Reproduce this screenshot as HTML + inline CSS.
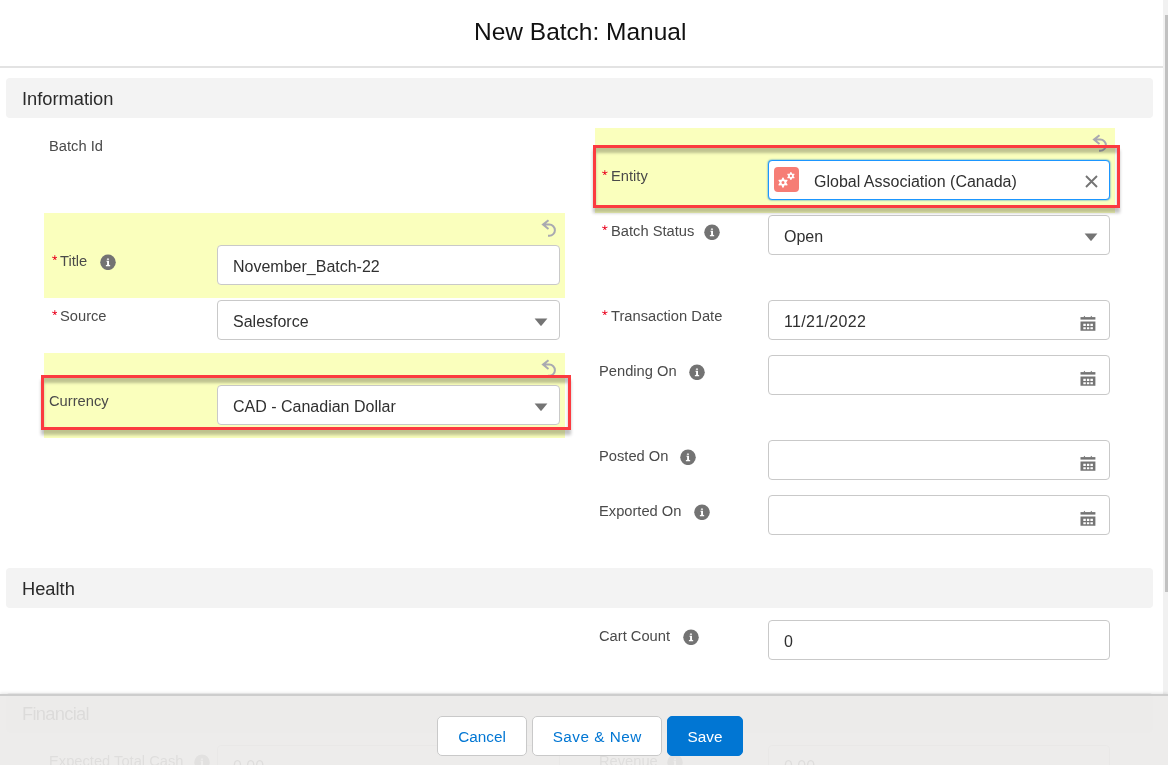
<!DOCTYPE html>
<html><head><meta charset="utf-8">
<style>
html,body{margin:0;padding:0}
body{width:1168px;height:765px;overflow:hidden;position:relative;background:#fff;font-family:"Liberation Sans",sans-serif}
.a{position:absolute}
.t{position:absolute;line-height:1;white-space:nowrap;will-change:transform}
.hdr-line{left:0;top:66px;width:1163px;height:2px;background:#e3e3e3}
.sec{left:6px;width:1147px;height:40px;background:#f3f3f3;border-radius:4px}
.sect{font-size:18.3px;color:#2a2a2a;left:22.2px;margin-top:.5px}
.hl{background:#faffbd}
.lbl{font-size:14.7px;color:#4a4a4a;margin-top:.4px}
.ast{position:absolute}
.inp{position:absolute;box-sizing:border-box;height:40px;border:1px solid #c9c9c9;border-radius:4px;background:#fff}
.il{left:217px;width:343px}
.ir{left:768px;width:342px}
.itx{position:absolute;left:15.2px;top:12.5px;font-size:16px;line-height:1;color:#303030;white-space:nowrap;will-change:transform}
.info{position:absolute;width:16px;height:16px}
.arrow{position:absolute;right:11px;top:17px}
.cal{position:absolute;right:13px;top:14px;width:17px;height:17px}
.undo{position:absolute;width:16px;height:18px}
.redbox{position:absolute;box-sizing:border-box;border:3px solid #fb3b40;box-shadow:0 5px 3px rgba(0,0,0,.24), inset 0 5px 3px rgba(0,0,0,.24)}
.footer{left:0;top:694px;width:1168px;height:71px;background:rgba(235,234,233,.92);border-top:2px solid #cdcdcd;box-sizing:border-box;box-shadow:0 -1px 3px rgba(0,0,0,.1)}
.btn{position:absolute;top:716px;height:40px;box-sizing:border-box;border:1px solid #c9c9c9;border-radius:5px;background:#fff;color:#0176d3;font-size:15.3px;display:flex;align-items:center;justify-content:center;white-space:nowrap;padding-top:1.4px;will-change:transform}
.scroll-track{left:1163px;top:0;width:5px;height:694px;background:#f1f1f1}
.scroll-thumb{left:1165px;top:15px;width:3px;height:577px;background:#c1c1c1}
</style></head><body>

<!-- header -->
<div class="t" style="left:473.6px;top:19.5px;font-size:24.5px;color:#111">New Batch: Manual</div>
<div class="a hdr-line"></div>

<!-- Information section -->
<div class="a sec" style="top:78px"></div>
<div class="t sect" style="top:89.2px">Information</div>

<!-- Left column -->
<div class="t lbl" style="left:48.8px;top:138.5px">Batch Id</div>

<div class="a hl" style="left:44px;top:213px;width:521px;height:85px"></div>
<svg class="undo" style="left:541px;top:219px" viewBox="0 0 16 18"><g><path d="M7.5 1.2 L2 5.6 L7.5 10 M2 5.6 H8.3 A5.6 5.6 0 0 1 8.3 16.8 H7" fill="none" stroke="#a9a9b1" stroke-width="2"/></g></svg>
<svg class="ast" style="left:51.5px;top:254.6px" width="5.6" height="5.8" viewBox="0 0 6 6.2"><g><path d="M3 0.6 V3.2 M3 3.2 L0.5 2.4 M3 3.2 L5.5 2.4 M3 3.2 L1.5 5.5 M3 3.2 L4.5 5.5" stroke="#ea001e" stroke-width="0.95" stroke-linecap="round" fill="none"/></g></svg>
<div class="t lbl" style="left:59.5px;top:253.4px">Title</div>
<svg class="info" style="left:100px;top:254px" viewBox="0 0 16 16"><g transform="translate(0 .35)"><circle cx="8" cy="8" r="7.75" fill="#737373"/><rect x="6.85" y="4.2" width="2.2" height="1.3" rx=".45" fill="#fff"/><path d="M6.5 6.5 H9.0 V10.4 L10.2 10.85 V11.85 H5.85 V10.85 L7.1 10.4 V7.5 L6.5 7.3 Z" fill="#fff"/></g></svg>
<div class="inp il" style="top:245px"><div class="itx">November_Batch-22</div></div>

<svg class="ast" style="left:51.5px;top:309.6px" width="5.6" height="5.8" viewBox="0 0 6 6.2"><g><path d="M3 0.6 V3.2 M3 3.2 L0.5 2.4 M3 3.2 L5.5 2.4 M3 3.2 L1.5 5.5 M3 3.2 L4.5 5.5" stroke="#ea001e" stroke-width="0.95" stroke-linecap="round" fill="none"/></g></svg>
<div class="t lbl" style="left:59.5px;top:308.6px">Source</div>
<div class="inp il" style="top:300px"><div class="itx">Salesforce</div><svg class="arrow" width="14" height="9" viewBox="0 0 14 9"><path d="M0.6 0.5 H13.4 L7.6 7.6 Q7 8.2 6.4 7.6 Z" fill="#747474"/></svg></div>

<div class="a hl" style="left:44px;top:353px;width:521px;height:85px"></div>
<svg class="undo" style="left:541px;top:359px" viewBox="0 0 16 18"><g><path d="M7.5 1.2 L2 5.6 L7.5 10 M2 5.6 H8.3 A5.6 5.6 0 0 1 8.3 16.8 H7" fill="none" stroke="#a9a9b1" stroke-width="2"/></g></svg>
<div class="t lbl" style="left:48.8px;top:393.6px">Currency</div>
<div class="inp il" style="top:385px"><div class="itx">CAD - Canadian Dollar</div><svg class="arrow" width="14" height="9" viewBox="0 0 14 9"><path d="M0.6 0.5 H13.4 L7.6 7.6 Q7 8.2 6.4 7.6 Z" fill="#747474"/></svg></div>

<!-- Right column -->
<div class="a hl" style="left:595px;top:128px;width:520px;height:85px"></div>
<svg class="undo" style="left:1092px;top:134px" viewBox="0 0 16 18"><g><path d="M7.5 1.2 L2 5.6 L7.5 10 M2 5.6 H8.3 A5.6 5.6 0 0 1 8.3 16.8 H7" fill="none" stroke="#a9a9b1" stroke-width="2"/></g></svg>
<svg class="ast" style="left:602.2px;top:169.6px" width="5.6" height="5.8" viewBox="0 0 6 6.2"><g><path d="M3 0.6 V3.2 M3 3.2 L0.5 2.4 M3 3.2 L5.5 2.4 M3 3.2 L1.5 5.5 M3 3.2 L4.5 5.5" stroke="#ea001e" stroke-width="0.95" stroke-linecap="round" fill="none"/></g></svg>
<div class="t lbl" style="left:611px;top:168.6px">Entity</div>
<div class="inp ir" style="top:160px;border-color:#1b96ff;box-shadow:0 0 2px #0176d3">
  <div class="a" style="left:5.3px;top:6.3px;width:25px;height:25px;border-radius:4px;background:#f67d75"></div>
  <svg class="a" style="left:5.3px;top:6.3px" width="25" height="25" viewBox="0 0 25 25">
    <path fill="#fff" fill-rule="evenodd" d="M8.56 10.52 L9.44 10.52 L10.60 12.83 L13.18 12.67 L13.62 13.44 L12.20 15.60 L13.62 17.76 L13.18 18.53 L10.60 18.37 L9.44 20.68 L8.56 20.68 L7.40 18.37 L4.82 18.53 L4.38 17.76 L5.80 15.60 L4.38 13.44 L4.82 12.67 L7.40 12.83 Z M9.00 14.10 A1.5 1.5 0 1 0 9.00 17.10 A1.5 1.5 0 1 0 9.00 14.10 Z"/>
    <path fill="#fff" fill-rule="evenodd" d="M16.54 4.92 L17.26 4.92 L18.20 6.75 L20.26 6.65 L20.62 7.27 L19.50 9.00 L20.62 10.73 L20.26 11.35 L18.20 11.25 L17.26 13.08 L16.54 13.08 L15.60 11.25 L13.54 11.35 L13.18 10.73 L14.30 9.00 L13.18 7.27 L13.54 6.65 L15.60 6.75 Z M16.90 7.85 A1.15 1.15 0 1 0 16.90 10.15 A1.15 1.15 0 1 0 16.90 7.85 Z"/>
  </svg>
  <div class="itx" style="left:45.2px">Global Association (Canada)</div>
  <svg class="a" style="left:316px;top:13.8px" width="13" height="13" viewBox="0 0 13 13"><path d="M1 1 L12 12 M12 1 L1 12" stroke="#747474" stroke-width="1.9"/></svg>
</div>

<svg class="ast" style="left:602.2px;top:224.6px" width="5.6" height="5.8" viewBox="0 0 6 6.2"><g><path d="M3 0.6 V3.2 M3 3.2 L0.5 2.4 M3 3.2 L5.5 2.4 M3 3.2 L1.5 5.5 M3 3.2 L4.5 5.5" stroke="#ea001e" stroke-width="0.95" stroke-linecap="round" fill="none"/></g></svg>
<div class="t lbl" style="left:611px;top:223.6px">Batch Status</div>
<svg class="info" style="left:704px;top:224px" viewBox="0 0 16 16"><g transform="translate(0 .35)"><circle cx="8" cy="8" r="7.75" fill="#737373"/><rect x="6.85" y="4.2" width="2.2" height="1.3" rx=".45" fill="#fff"/><path d="M6.5 6.5 H9.0 V10.4 L10.2 10.85 V11.85 H5.85 V10.85 L7.1 10.4 V7.5 L6.5 7.3 Z" fill="#fff"/></g></svg>
<div class="inp ir" style="top:215px"><div class="itx">Open</div><svg class="arrow" width="14" height="9" viewBox="0 0 14 9"><path d="M0.6 0.5 H13.4 L7.6 7.6 Q7 8.2 6.4 7.6 Z" fill="#747474"/></svg></div>

<svg class="ast" style="left:602.2px;top:309.6px" width="5.6" height="5.8" viewBox="0 0 6 6.2"><g><path d="M3 0.6 V3.2 M3 3.2 L0.5 2.4 M3 3.2 L5.5 2.4 M3 3.2 L1.5 5.5 M3 3.2 L4.5 5.5" stroke="#ea001e" stroke-width="0.95" stroke-linecap="round" fill="none"/></g></svg>
<div class="t lbl" style="left:611px;top:308.6px">Transaction Date</div>
<div class="inp ir" style="top:300px"><div class="itx" style="letter-spacing:.33px">11/21/2022</div>
  <svg class="cal" viewBox="0 0 17 17"><g fill="#747474"><path d="M4.4 2.3 L5.4 0.7 L6.4 2.3 Z M11.3 2.3 L12.3 0.7 L13.3 2.3 Z"/><rect x="1.5" y="2.1" width="14.9" height="2.5"/><path fill-rule="evenodd" d="M1.5 6.5 H16.4 V15.8 H1.5 Z M4.3 8.75 V10.9 H6.8 V8.75 Z M7.9 8.75 V10.9 H10.3 V8.75 Z M11.4 8.75 V10.9 H13.9 V8.75 Z M4.3 12.2 V14.3 H6.8 V12.2 Z M7.9 12.2 V14.3 H10.3 V12.2 Z M11.4 12.2 V14.3 H13.9 V12.2 Z"/></g></svg>
</div>

<div class="t lbl" style="left:599.2px;top:363.6px">Pending On</div>
<svg class="info" style="left:689px;top:364px" viewBox="0 0 16 16"><g transform="translate(0 .35)"><circle cx="8" cy="8" r="7.75" fill="#737373"/><rect x="6.85" y="4.2" width="2.2" height="1.3" rx=".45" fill="#fff"/><path d="M6.5 6.5 H9.0 V10.4 L10.2 10.85 V11.85 H5.85 V10.85 L7.1 10.4 V7.5 L6.5 7.3 Z" fill="#fff"/></g></svg>
<div class="inp ir" style="top:355px">
  <svg class="cal" viewBox="0 0 17 17"><g fill="#747474"><path d="M4.4 2.3 L5.4 0.7 L6.4 2.3 Z M11.3 2.3 L12.3 0.7 L13.3 2.3 Z"/><rect x="1.5" y="2.1" width="14.9" height="2.5"/><path fill-rule="evenodd" d="M1.5 6.5 H16.4 V15.8 H1.5 Z M4.3 8.75 V10.9 H6.8 V8.75 Z M7.9 8.75 V10.9 H10.3 V8.75 Z M11.4 8.75 V10.9 H13.9 V8.75 Z M4.3 12.2 V14.3 H6.8 V12.2 Z M7.9 12.2 V14.3 H10.3 V12.2 Z M11.4 12.2 V14.3 H13.9 V12.2 Z"/></g></svg>
</div>

<div class="t lbl" style="left:599.2px;top:448.6px">Posted On</div>
<svg class="info" style="left:680px;top:449px" viewBox="0 0 16 16"><g transform="translate(0 .35)"><circle cx="8" cy="8" r="7.75" fill="#737373"/><rect x="6.85" y="4.2" width="2.2" height="1.3" rx=".45" fill="#fff"/><path d="M6.5 6.5 H9.0 V10.4 L10.2 10.85 V11.85 H5.85 V10.85 L7.1 10.4 V7.5 L6.5 7.3 Z" fill="#fff"/></g></svg>
<div class="inp ir" style="top:440px">
  <svg class="cal" viewBox="0 0 17 17"><g fill="#747474"><path d="M4.4 2.3 L5.4 0.7 L6.4 2.3 Z M11.3 2.3 L12.3 0.7 L13.3 2.3 Z"/><rect x="1.5" y="2.1" width="14.9" height="2.5"/><path fill-rule="evenodd" d="M1.5 6.5 H16.4 V15.8 H1.5 Z M4.3 8.75 V10.9 H6.8 V8.75 Z M7.9 8.75 V10.9 H10.3 V8.75 Z M11.4 8.75 V10.9 H13.9 V8.75 Z M4.3 12.2 V14.3 H6.8 V12.2 Z M7.9 12.2 V14.3 H10.3 V12.2 Z M11.4 12.2 V14.3 H13.9 V12.2 Z"/></g></svg>
</div>

<div class="t lbl" style="left:599.2px;top:503.6px">Exported On</div>
<svg class="info" style="left:694px;top:504px" viewBox="0 0 16 16"><g transform="translate(0 .35)"><circle cx="8" cy="8" r="7.75" fill="#737373"/><rect x="6.85" y="4.2" width="2.2" height="1.3" rx=".45" fill="#fff"/><path d="M6.5 6.5 H9.0 V10.4 L10.2 10.85 V11.85 H5.85 V10.85 L7.1 10.4 V7.5 L6.5 7.3 Z" fill="#fff"/></g></svg>
<div class="inp ir" style="top:495px">
  <svg class="cal" viewBox="0 0 17 17"><g fill="#747474"><path d="M4.4 2.3 L5.4 0.7 L6.4 2.3 Z M11.3 2.3 L12.3 0.7 L13.3 2.3 Z"/><rect x="1.5" y="2.1" width="14.9" height="2.5"/><path fill-rule="evenodd" d="M1.5 6.5 H16.4 V15.8 H1.5 Z M4.3 8.75 V10.9 H6.8 V8.75 Z M7.9 8.75 V10.9 H10.3 V8.75 Z M11.4 8.75 V10.9 H13.9 V8.75 Z M4.3 12.2 V14.3 H6.8 V12.2 Z M7.9 12.2 V14.3 H10.3 V12.2 Z M11.4 12.2 V14.3 H13.9 V12.2 Z"/></g></svg>
</div>

<!-- Health section -->
<div class="a sec" style="top:568px"></div>
<div class="t sect" style="top:579.2px">Health</div>
<div class="t lbl" style="left:599.2px;top:628.6px">Cart Count</div>
<svg class="info" style="left:683px;top:629px" viewBox="0 0 16 16"><g transform="translate(0 .35)"><circle cx="8" cy="8" r="7.75" fill="#737373"/><rect x="6.85" y="4.2" width="2.2" height="1.3" rx=".45" fill="#fff"/><path d="M6.5 6.5 H9.0 V10.4 L10.2 10.85 V11.85 H5.85 V10.85 L7.1 10.4 V7.5 L6.5 7.3 Z" fill="#fff"/></g></svg>
<div class="inp ir" style="top:620px"><div class="itx">0</div></div>

<!-- Financial section (under footer) -->
<div class="a sec" style="top:693px"></div>
<div class="t sect" style="top:704.5px;letter-spacing:-.7px">Financial</div>
<div class="t lbl" style="left:48.8px;top:753.6px">Expected Total Cash</div>
<svg class="info" style="left:194px;top:754.4px" viewBox="0 0 16 16"><g transform="translate(0 .35)"><circle cx="8" cy="8" r="7.75" fill="#737373"/><rect x="6.85" y="4.2" width="2.2" height="1.3" rx=".45" fill="#fff"/><path d="M6.5 6.5 H9.0 V10.4 L10.2 10.85 V11.85 H5.85 V10.85 L7.1 10.4 V7.5 L6.5 7.3 Z" fill="#fff"/></g></svg>
<div class="inp il" style="top:745px"><div class="itx" style="color:#444">0.00</div></div>
<div class="t lbl" style="left:599.2px;top:753.6px">Revenue</div>
<svg class="info" style="left:667px;top:754.4px" viewBox="0 0 16 16"><g transform="translate(0 .35)"><circle cx="8" cy="8" r="7.75" fill="#737373"/><rect x="6.85" y="4.2" width="2.2" height="1.3" rx=".45" fill="#fff"/><path d="M6.5 6.5 H9.0 V10.4 L10.2 10.85 V11.85 H5.85 V10.85 L7.1 10.4 V7.5 L6.5 7.3 Z" fill="#fff"/></g></svg>
<div class="inp ir" style="top:745px"><div class="itx" style="color:#444">0.00</div></div>

<!-- scrollbar -->
<div class="a scroll-track"></div>
<div class="a scroll-thumb"></div>

<!-- annotations -->
<div class="redbox" style="left:41px;top:375px;width:530px;height:55px"></div>
<div class="redbox" style="left:593px;top:145px;width:527px;height:63px"></div>

<!-- footer -->
<div class="a footer"></div>
<div class="btn" style="left:437px;width:90px">Cancel</div>
<div class="btn" style="left:532px;width:130px;letter-spacing:.5px;text-indent:.5px">Save &amp; New</div>
<div class="btn" style="left:667px;width:76px;background:#0176d3;border-color:#0176d3;color:#fff">Save</div>

</body></html>
